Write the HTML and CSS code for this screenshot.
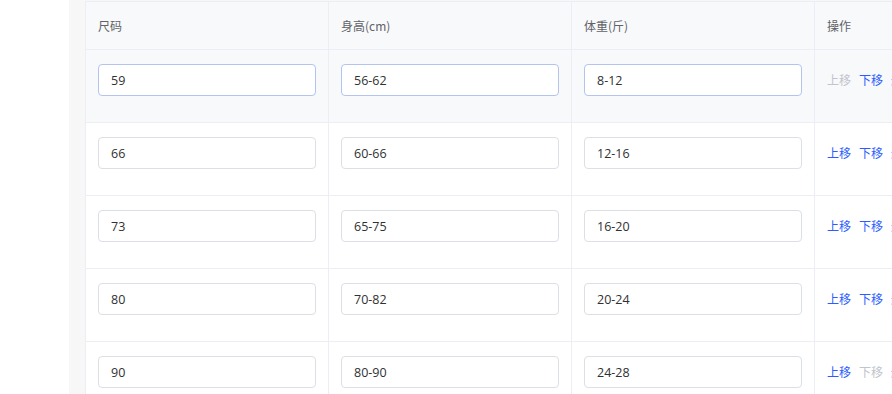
FILE: index.html
```html
<!DOCTYPE html>
<html lang="zh">
<head>
<meta charset="UTF-8">
<meta name="viewport" content="width=device-width, initial-scale=1.0">
<title>尺码表</title>
<link rel="stylesheet" href="styles.css">
</head>
<body>
<div class="page">
    <div class="panel">
        <table class="size-table">
            <colgroup>
                <col class="c-field">
                <col class="c-field">
                <col class="c-field">
                <col class="c-op">
            </colgroup>
            <thead>
                <tr>
                    <th>尺码</th>
                    <th>身高(cm)</th>
                    <th>体重(斤)</th>
                    <th>操作</th>
                </tr>
            </thead>
            <tbody>
                <tr class="hover">
                    <td><input class="ipt focus" value="59"></td>
                    <td><input class="ipt focus" value="56-62"></td>
                    <td><input class="ipt focus" value="8-12"></td>
                    <td class="op"><a class="link off">上移</a><a class="link">下移</a><a class="link">删除</a></td>
                </tr>
                <tr>
                    <td><input class="ipt" value="66"></td>
                    <td><input class="ipt" value="60-66"></td>
                    <td><input class="ipt" value="12-16"></td>
                    <td class="op"><a class="link">上移</a><a class="link">下移</a><a class="link">删除</a></td>
                </tr>
                <tr>
                    <td><input class="ipt" value="73"></td>
                    <td><input class="ipt" value="65-75"></td>
                    <td><input class="ipt" value="16-20"></td>
                    <td class="op"><a class="link">上移</a><a class="link">下移</a><a class="link">删除</a></td>
                </tr>
                <tr>
                    <td><input class="ipt" value="80"></td>
                    <td><input class="ipt" value="70-82"></td>
                    <td><input class="ipt" value="20-24"></td>
                    <td class="op"><a class="link">上移</a><a class="link">下移</a><a class="link">删除</a></td>
                </tr>
                <tr>
                    <td><input class="ipt" value="90"></td>
                    <td><input class="ipt" value="80-90"></td>
                    <td><input class="ipt" value="24-28"></td>
                    <td class="op"><a class="link">上移</a><a class="link off">下移</a><a class="link">删除</a></td>
                </tr>
            </tbody>
        </table>
    </div>
</div>
</body>
</html>
```

FILE: styles.css
```css
html, body {
    margin: 0;
    background: #fff;
    overflow: hidden;
}
body {
    font-family: "Open Sans", "Noto Sans CJK SC", sans-serif;
    color: #303133;
}
.page {
    padding-left: 69px;
    height: 394px;
}
.panel {
    background: #f7f7f8;
    padding: 1px 0 0 16px;
    height: 100%;
    width: 1000px;
}
.size-table {
    border-collapse: collapse;
    background: #fff;
    table-layout: fixed;
    width: 929px;
}
.c-field {
    width: 243px;
}
.c-op {
    width: 200px;
}
.size-table th,
.size-table td {
    border: 1px solid #ebeef5;
    text-align: left;
    vertical-align: top;
}
.size-table th {
    background: #f8f9fb;
    font-family: "Noto Sans CJK SC", sans-serif;
    font-size: 12px;
    font-weight: normal;
    color: #606266;
    height: 47px;
    line-height: 47px;
    padding: 0 12px;
}
.size-table td {
    height: 73px;
    padding: 14px 12px 0;
    box-sizing: border-box;
}
.size-table tr.hover td {
    background: #f8f9fb;
}
.ipt {
    display: block;
    box-sizing: border-box;
    width: 218px;
    height: 32px;
    border: 1px solid #dcdfe6;
    border-radius: 4px;
    padding: 0 12px;
    font-family: "Open Sans", "Noto Sans CJK SC", sans-serif;
    font-size: 12.5px;
    color: #303133;
    background: #fff;
    outline: none;
}
.ipt.focus {
    border-color: #b3c5ed;
}
.op {
    white-space: nowrap;
}
.link {
    display: inline-block;
    font-family: "Noto Sans CJK SC", sans-serif;
    font-size: 12px;
    line-height: 32px;
    color: #2b5cff;
    margin-right: 8px;
    cursor: pointer;
}
.link.off {
    color: #c0c4cc;
}
```
